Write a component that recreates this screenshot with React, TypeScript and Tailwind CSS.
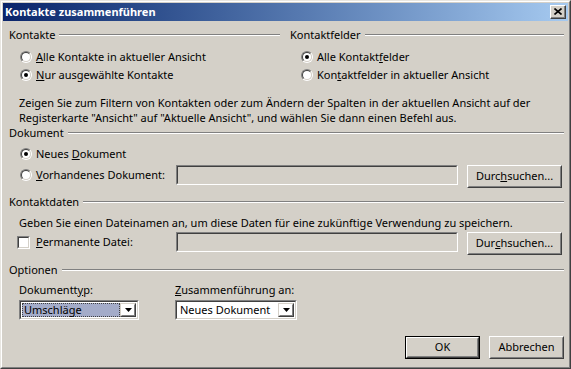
import React from 'react'

function Radio({ checked, children }: { checked?: boolean; children: React.ReactNode }) {
  return (
    <div className="flex items-center">
      <span className="w-[12px] h-[12px] shrink-0 rounded-full border border-t-[#808080] border-l-[#808080] border-b-white border-r-white flex">
        <span className="flex-1 rounded-full border border-t-[#404040] border-l-[#404040] border-b-[#d4d0c8] border-r-[#d4d0c8] bg-white flex items-center justify-center">
          {checked && <span className="w-[4px] h-[4px] rounded-full bg-black" />}
        </span>
      </span>
      <span className="ml-[4px] whitespace-nowrap">{children}</span>
    </div>
  )
}

function Checkbox({ children }: { children: React.ReactNode }) {
  return (
    <div className="flex items-center">
      <span className="w-[13px] h-[13px] shrink-0 border border-t-[#808080] border-l-[#808080] border-b-white border-r-white flex">
        <span className="flex-1 border border-t-[#404040] border-l-[#404040] border-b-[#d4d0c8] border-r-[#d4d0c8] bg-white" />
      </span>
      <span className="ml-[6px] whitespace-nowrap">{children}</span>
    </div>
  )
}

function GroupHeader({ label }: { label: string }) {
  return (
    <div className="flex items-center h-[14px]">
      <span className="whitespace-nowrap">{label}</span>
      <span className="flex-1 ml-[4px] h-[2px] border-t border-t-[#808080] border-b border-b-white" />
    </div>
  )
}

function Sunken({ className, children }: { className?: string; children?: React.ReactNode }) {
  return (
    <div className={`border border-t-[#808080] border-l-[#808080] border-b-white border-r-white flex ${className ?? ''}`}>
      <div className="flex-1 border border-t-[#404040] border-l-[#404040] border-b-[#d4d0c8] border-r-[#d4d0c8] flex">
        {children}
      </div>
    </div>
  )
}

function Button({ children, isDefault, className }: { children: React.ReactNode; isDefault?: boolean; className?: string }) {
  return (
    <div className={`flex shrink-0 ${isDefault ? 'border border-black' : ''} ${className ?? ''}`}>
      <div className="flex-1 border border-t-white border-l-white border-b-[#404040] border-r-[#404040] flex">
        <div className="flex-1 border border-t-[#d4d0c8] border-l-[#d4d0c8] border-b-[#808080] border-r-[#808080] flex items-center justify-center whitespace-nowrap">
          {children}
        </div>
      </div>
    </div>
  )
}

function ArrowButton() {
  return (
    <div className="w-[16px] flex border border-t-[#d4d0c8] border-l-[#d4d0c8] border-b-[#404040] border-r-[#404040]">
      <div className="flex-1 border border-t-white border-l-white border-b-[#808080] border-r-[#808080] flex items-center justify-center">
        <svg width="7" height="4" viewBox="0 0 7 4">
          <path d="M0 0h7L3.5 4z" fill="#000" />
        </svg>
      </div>
    </div>
  )
}

function Select({ value, focused, className }: { value: string; focused?: boolean; className?: string }) {
  return (
    <Sunken className={className}>
      <div className="flex-1 bg-white flex p-[1px]">
        <div
          className={`flex-1 flex items-center pl-[1px] ${
            focused ? 'bg-[#a4acc9] border border-dotted border-[#404040]' : 'border border-transparent'
          }`}
        >
          {value}
        </div>
        <ArrowButton />
      </div>
    </Sunken>
  )
}

export default function App() {
  return (
    <div className="w-[571px] h-[369px] bg-[#d4d0c8] border-t border-l border-t-[#e8e6e1] border-l-[#e8e6e1] border-r border-b border-r-[#404040] border-b-[#404040] font-['Noto_Sans',sans-serif] text-[11px] text-black overflow-hidden">
      <div className="h-full border-t border-l border-t-white border-l-white border-r border-b border-r-[#808080] border-b-[#808080] p-[1px] flex flex-col">
        {/* Title bar */}
        <div className="h-[18px] shrink-0 bg-linear-to-r from-[#0a246a] to-[#a6caf0] flex items-center pl-[2px] pr-[2px]">
          <span className="font-bold text-white text-[11px] whitespace-nowrap">Kontakte zusammenführen</span>
          <div className="ml-auto w-[16px] h-[14px] bg-[#d4d0c8] flex border border-t-white border-l-white border-b-[#404040] border-r-[#404040]">
            <div className="flex-1 border-b border-r border-b-[#808080] border-r-[#808080] flex items-center justify-center">
              <svg width="8" height="7" viewBox="0 0 8 7">
                <path d="M0.5 0.5L7.5 6.5M7.5 0.5L0.5 6.5" stroke="#000" strokeWidth="1.6" />
              </svg>
            </div>
          </div>
        </div>

        {/* Content */}
        <div className="flex-1 flex flex-col pl-[6px] pr-[4px]">
          <div className="grid grid-cols-[271px_1fr] gap-[10px] mt-[7px]">
            <div className="flex flex-col">
              <GroupHeader label="Kontakte" />
              <div className="flex flex-col pl-[11px] mt-[6px]">
                <div className="h-[18px] flex items-center">
                  <Radio>
                    <span className="underline">A</span>lle Kontakte in aktueller Ansicht
                  </Radio>
                </div>
                <div className="h-[18px] flex items-center">
                  <Radio checked>
                    <span className="underline">N</span>ur ausgewählte Kontakte
                  </Radio>
                </div>
              </div>
            </div>
            <div className="flex flex-col">
              <GroupHeader label="Kontaktfelder" />
              <div className="flex flex-col pl-[11px] mt-[6px]">
                <div className="h-[18px] flex items-center">
                  <Radio checked>
                    Alle Kontakt<span className="underline">f</span>elder
                  </Radio>
                </div>
                <div className="h-[18px] flex items-center">
                  <Radio>
                    Kon<span className="underline">t</span>aktfelder in aktueller Ansicht
                  </Radio>
                </div>
              </div>
            </div>
          </div>

          <p className="mt-[11px] pl-[10px] leading-[15px] whitespace-nowrap">
            Zeigen Sie zum Filtern von Kontakten oder zum Ändern der Spalten in der aktuellen Ansicht auf der
            <br />
            Registerkarte "Ansicht" auf "Aktuelle Ansicht", und wählen Sie dann einen Befehl aus.
          </p>

          <div className="mt-[1px]">
            <GroupHeader label="Dokument" />
          </div>
          <div className="mt-[5px] h-[18px] flex items-center pl-[11px]">
            <Radio checked>
              Neues <span className="underline">D</span>okument
            </Radio>
          </div>
          <div className="mt-[2px] h-[23px] flex items-start pl-[11px]">
            <div className="w-[156px] h-[20px] flex items-center">
              <Radio>
                <span className="underline">V</span>orhandenes Dokument:
              </Radio>
            </div>
            <Sunken className="w-[282px] h-[20px]" />
            <Button className="ml-[9px] w-[95px] h-[23px]">
              Durc<span className="underline">h</span>suchen...
            </Button>
          </div>

          <div className="mt-[7px]">
            <GroupHeader label="Kontaktdaten" />
          </div>
          <div className="mt-[7px] h-[14px] flex items-center pl-[10px] whitespace-nowrap">
            Geben Sie einen Dateinamen an, um diese Daten für eine zukünftige Verwendung zu speichern.
          </div>
          <div className="mt-[2px] h-[23px] flex items-start pl-[8px]">
            <div className="w-[159px] h-[20px] flex items-center">
              <Checkbox>
                <span className="underline">P</span>ermanente Datei:
              </Checkbox>
            </div>
            <Sunken className="w-[282px] h-[20px]" />
            <Button className="ml-[9px] w-[95px] h-[23px]">
              Dur<span className="underline">c</span>hsuchen...
            </Button>
          </div>

          <div className="mt-[8px]">
            <GroupHeader label="Optionen" />
          </div>
          <div className="mt-[6px] flex pl-[10px]">
            <div className="w-[156px] flex flex-col">
              <div className="h-[14px] flex items-center whitespace-nowrap">
                Dokumentt<span className="underline">y</span>p:
              </div>
              <Select className="mt-[3px] w-[120px] h-[20px]" value="Umschläge" focused />
            </div>
            <div className="flex flex-col">
              <div className="h-[14px] flex items-center whitespace-nowrap">
                <span className="underline">Z</span>usammenführung an:
              </div>
              <Select className="mt-[3px] w-[122px] h-[20px]" value="Neues Dokument" />
            </div>
          </div>

          <div className="mt-[16px] flex justify-end">
            <Button isDefault className="w-[75px] h-[23px]">
              OK
            </Button>
            <Button className="ml-[9px] w-[75px] h-[23px]">Abbrechen</Button>
          </div>
        </div>
      </div>
    </div>
  )
}
